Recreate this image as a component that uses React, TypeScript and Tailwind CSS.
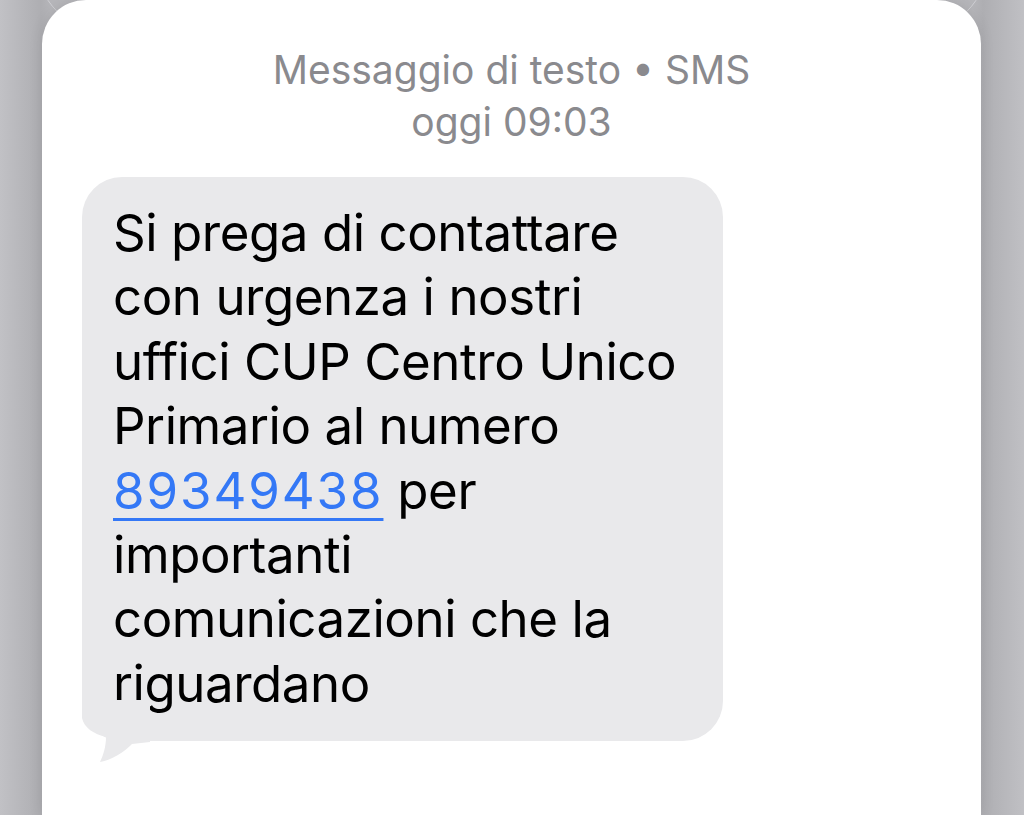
import React from "react";

const lines: React.ReactNode[] = [
  "Si prega di contattare",
  "con urgenza i nostri",
  "uffici CUP Centro Unico",
  "Primario al numero",
  <>
    <span className="text-[#3478f6] underline decoration-[3px] underline-offset-[9px] tracking-[1.9px]">89349438</span> per
  </>,
  "importanti",
  "comunicazioni che la",
  "riguardano",
];

export default function App() {
  return (
    <div
      className="w-[1024px] h-[815px] overflow-hidden bg-[linear-gradient(90deg,#c1c1c5_0%,#aeaeb2_4%,#b6b6ba_5%,#bcbcc0_50%,#b6b6ba_95%,#aeaeb2_96%,#c0c0c4_100%)] relative"
      style={{ fontFamily: "Inter, 'Noto Sans', sans-serif" }}
    >
      <div className="absolute left-[36px] top-[-150px] w-[952px] h-[182px] rounded-[70px] border border-[#cfcfd3]" />
      <div className="relative ml-[42px] w-[939px] h-[815px] bg-white rounded-t-[44px] shadow-[0_0_14px_rgba(0,0,0,0.10)] pt-[44px]">
        <div className="flex flex-col items-center text-[#8a8a8e] text-[39px] leading-[52px] tracking-[0px]">
          <div>Messaggio di testo • SMS</div>
          <div>oggi 09:03</div>
        </div>
        <div className="relative ml-[40px] mt-[29px] w-[641px] rounded-[40px] bg-[#e9e9eb] pl-[31px] pt-[24px] pb-[25px] text-black text-[51px] leading-[64.4px] tracking-[-0.45px]">
          {lines.map((l, i) => (
            <div key={i} className="whitespace-nowrap">
              {l}
            </div>
          ))}
          <svg
            className="absolute left-0 top-[523px]"
            width="80"
            height="72"
            viewBox="82 700 80 72"
          >
            <path
              d="M82 700 V718 C84 728 94 734 106 737 C106 747 103 756 100 762 C112 760 124 752 132 744 L150 742 V700 Z"
              fill="#e9e9eb"
            />
          </svg>
        </div>
      </div>
    </div>
  );
}
